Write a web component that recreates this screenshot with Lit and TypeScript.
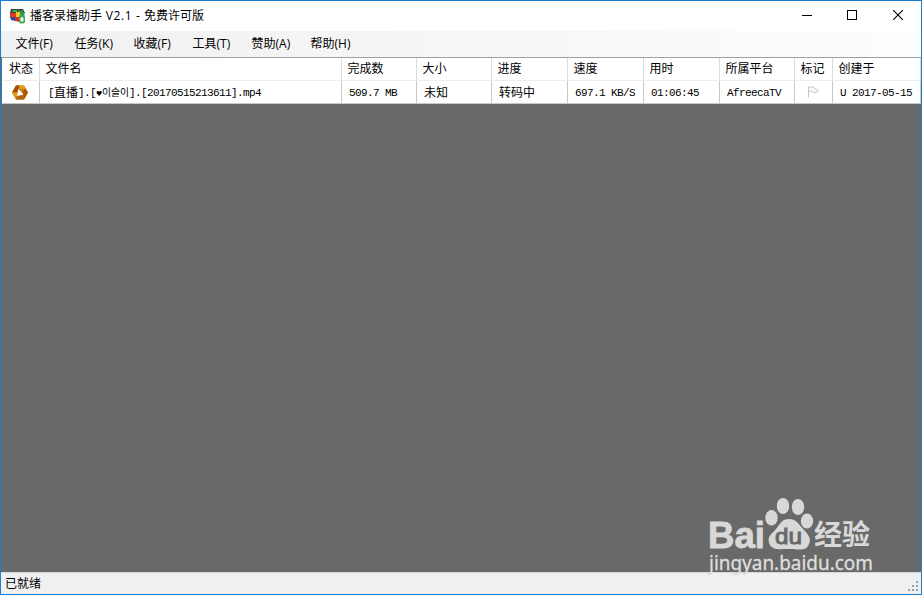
import { LitElement, html, css, svg } from "lit";
import { customElement } from "lit/decorators.js";

const MENUS: [string, string][] = [
  ["文件", "(F)"], ["任务", "(K)"], ["收藏", "(F)"], ["工具", "(T)"], ["赞助", "(A)"], ["帮助", "(H)"],
];

const HEADERS = ["状态", "文件名", "完成数", "大小", "进度", "速度", "用时", "所属平台", "标记", "创建于"];

@customElement("task-grid")
class TaskGrid extends LitElement {
  static styles = css`
    :host { display: block; margin-left: 1px; border-top: 1px solid #a0a0a0; font: 12px "Noto Sans CJK SC", sans-serif; color: #000; }
    .row { display: grid; grid-template-columns: 38px 302px 75px 75px 76px 76px 76px 75px 38px 88px; background: #fff; }
    .cell { box-sizing: border-box; border-right: 1px solid #dcdcdc; white-space: pre; overflow: hidden; height: 23px; line-height: 20px; padding-left: 5.5px; border-bottom: 1px solid #ededed; }
    .head .cell:first-child { padding-left: 7px; }
    .body .cell { line-height: 21px; padding-left: 7px; border-bottom-color: #c8c8c8; border-right-color: #c8c8c8; }
    .body .icon { padding: 3px 0 0 9px; white-space: normal; }
    .body .flag { padding: 4px 0 0 11px; white-space: normal; }
    .body .file { padding-left: 8px; }
    .mono { font: 11px/18px "Liberation Mono", monospace; letter-spacing: -0.6px; vertical-align: 1px; }
    .heart { display: inline-block; width: 6px; font: 7px/18px "DejaVu Sans", sans-serif; vertical-align: 1px; }
    .hangul { display: inline-block; width: 27px; font: 9.8px/18px "Noto Sans CJK KR", sans-serif; vertical-align: 1px; }
    svg { display: block; }
  `;
  private m(t: string) { return html`<span class="mono">${t}</span>`; }
  render() {
    const m = this.m;
    return html`
      <div class="row head">${HEADERS.map((h) => html`<div class="cell">${h}</div>`)}</div>
      <div class="row body">
        <div class="cell icon">
          <svg width="18" height="17" viewBox="0 0 18 17">
            <path d="M1 8.5 5 1.5H13L17 8.5 13 15.5H5Z" fill="#c9780d" />
            <path d="M5 1.5H9L6 8 1 8.5Z" fill="#9d520b" />
            <path d="M8 1.5H13L15 5 9 5Z" fill="#e89b18" />
            <path d="M14 4 17 8.5 13 15.5 12 9Z" fill="#a8560d" />
            <path d="M1 8.5 6 8 6 12 5 15.5Z" fill="#e39716" />
            <path d="M5 15.5 6 12 12 11 13 15.5Z" fill="#b4600c" />
            <path d="M7.5 4.8 12.5 10.5 6 12Z" fill="#fff" />
          </svg>
        </div>
        <div class="cell file">${m("[")}直播${m("].[")}<span class="heart">♥</span><span class="hangul">이슬이</span>${m("].[20170515213611].mp4")}</div>
        <div class="cell">${m("509.7 MB")}</div>
        <div class="cell">未知</div>
        <div class="cell">转码中</div>
        <div class="cell">${m("697.1 KB/S")}</div>
        <div class="cell">${m("01:06:45")}</div>
        <div class="cell">${m("AfreecaTV")}</div>
        <div class="cell flag">
          <svg width="14" height="14" viewBox="0 0 14 14">
            <path d="M2.5 1.5V12.5M2.5 2H7.5L8.5 3.5 12.5 5.5 10 7.5H7L6 6.5H3" fill="#f7f7f7" stroke="#c6c6c6" />
          </svg>
        </div>
        <div class="cell">${m("U 2017-05-15")}</div>
      </div>`;
  }
}

@customElement("site-watermark")
class SiteWatermark extends LitElement {
  static styles = css`
    :host { display: block; }
    svg { display: block; }
    .brand { font: bold 37px "Liberation Sans", sans-serif; fill: #d8d8d8; stroke: #d8d8d8; stroke-width: 0.8px; }
    .du { font: 22px "Liberation Sans", sans-serif; fill: #696969; stroke: #696969; stroke-width: 1px; }
    .cn { font: bold 28px "Noto Sans CJK SC", sans-serif; fill: #d8d8d8; }
    .url { font: 19px "Noto Sans", sans-serif; fill: #dedede; stroke: #dedede; stroke-width: 0.3px; }
  `;
  render() {
    return html`<svg width="175" height="80" viewBox="0 0 175 80">
      <text class="brand" x="1" y="51" textLength="57" lengthAdjust="spacingAndGlyphs">Bai</text>
      <g fill="#d8d8d8">
        <ellipse cx="64.5" cy="20.8" rx="6.2" ry="7.8" />
        <ellipse cx="76" cy="9" rx="6.2" ry="8" />
        <ellipse cx="91" cy="10" rx="6.2" ry="8" />
        <ellipse cx="100" cy="24" rx="6.2" ry="7.5" />
        <path d="M82 22C90 22 92 28 97 33C103 39 104 43 102 47C99 55 92 52 82 52C73 52 65 54 62 46C60 39 65 37 69 32C73 27 75 22 82 22Z" />
      </g>
      <text class="du" x="68" y="46.5" textLength="27" lengthAdjust="spacingAndGlyphs">du</text>
      <text class="cn" x="107" y="48" textLength="56" lengthAdjust="spacingAndGlyphs">经验</text>
      <text class="url" x="2" y="72.5" textLength="164" lengthAdjust="spacingAndGlyphs">jingyan.baidu.com</text>
    </svg>`;
  }
}

@customElement("app-root")
class AppRoot extends LitElement {
  static styles = css`
    :host { display: flex; flex-direction: column; box-sizing: border-box; width: 922px; height: 595px; position: relative; border: 1px solid #1a7fd0; background: #696969; font: 12px "Noto Sans CJK SC", sans-serif; color: #000; overflow: hidden; }
    svg { display: block; }
    .title { display: flex; align-items: center; height: 30px; background: #fff; flex: none; }
    .logo { margin: 0 4px 0 8px; }
    .name { flex: 1; white-space: pre; line-height: 18px; padding-bottom: 1px; }
    .lat { font-family: "Open Sans", sans-serif; }
    .name .lat { letter-spacing: 0.6px; }
    .ctl { width: 46px; display: flex; justify-content: center; padding-bottom: 2px; }
    .menu { display: flex; height: 26px; flex: none; padding-left: 14.5px; background: linear-gradient(90deg, #f0f0f0, #fdfdfd); line-height: 24px; }
    .item { white-space: nowrap; width: 59px; }
    .fill { flex: 1; }
    .status { flex: none; height: 21px; border-top: 1px solid #d7d7d7; background: #f0f0f0; display: flex; justify-content: space-between; align-items: flex-end; padding: 0 2px 0 4px; line-height: 22px; }
    .grip { margin-bottom: 2px; }
    .mark { position: absolute; left: 706px; top: 496px; }
  `;
  render() {
    return html`
      <div class="title">
        <svg class="logo" width="17" height="17" viewBox="0 0 17 17">
          <path d="M2 1H14L16 5H1Z" fill="#27482c" />
          <path d="M4 2H8V4H3Z" fill="#5fae55" /><path d="M9 2H14V4H9Z" fill="#3c7c41" />
          <path d="M1 5H7V9H1Z" fill="#e33a22" /><path d="M7 4H11V9H7Z" fill="#f6c42e" />
          <path d="M11 4H16L15 9H11Z" fill="#32974a" />
          <path d="M1 9H6V13L2 12Z" fill="#294fa8" /><path d="M6 9H11V14L6 13Z" fill="#d92d20" />
          <rect x="10" y="7" width="6" height="8.5" rx="2" fill="#3da558" />
          <ellipse cx="13" cy="11.5" rx="1.7" ry="2.4" fill="#e6f6e3" />
        </svg>
        <div class="name">播客录播助手<span class="lat"> V2.1 - </span>免费许可版</div>
        <div class="ctl"><svg width="12" height="10"><path d="M2 5.5H12" stroke="#000" /></svg></div>
        <div class="ctl"><svg width="10" height="10"><rect x=".5" y=".5" width="9" height="9" fill="none" stroke="#000" /></svg></div>
        <div class="ctl"><svg width="10" height="10"><path d="M0 0 10 10M10 0 0 10" stroke="#000" stroke-width="1.1" /></svg></div>
      </div>
      <div class="menu">${MENUS.map(([t, k]) => html`<div class="item">${t}<span class="lat">${k}</span></div>`)}</div>
      <task-grid></task-grid>
      <div class="fill"></div>
      <div class="status">
        <span>已就绪</span>
        <svg class="grip" width="11" height="11">${[[8, 0], [4, 4], [8, 4], [0, 8], [4, 8], [8, 8]].map(([x, y]) => svg`<rect x=${x} y=${y} width="2" height="2" fill="#9e9e9e" />`)}</svg>
      </div>
      <site-watermark class="mark"></site-watermark>`;
  }
}
